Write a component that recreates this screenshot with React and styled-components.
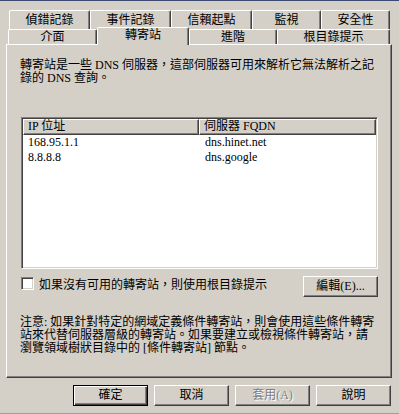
import React from "react";
import styled, { createGlobalStyle, css } from "styled-components";

const GlobalStyle = createGlobalStyle`
  html, body {
    margin: 0;
    padding: 0;
    background: #d4d0c8;
  }
  body {
    font-family: "Liberation Serif", "Noto Sans CJK TC", serif;
    font-size: 12px;
    color: #000;
  }
`;

const Window = styled.div`
  width: 399px;
  height: 414px;
  box-sizing: border-box;
  background: #d4d0c8;
  border-top: 1px solid #3c4a72;
  border-bottom: 1px solid #a09d96;
  padding-top: 9px;
  display: flex;
  flex-direction: column;
`;

const TabRow = styled.div`
  display: flex;
  padding-left: ${(p) => p.$indent}px;
  height: ${(p) => p.$height}px;
`;

const Tab = styled.div`
  position: relative;
  box-sizing: border-box;
  width: ${(p) => p.$w}px;
  height: 100%;
  background: #d4d0c8;
  border-top: 1px solid #fff;
  border-left: 1px solid #fff;
  border-right: 1px solid #404040;
  border-top-left-radius: 2px;
  border-top-right-radius: 2px;
  box-shadow: inset -1px 0 0 #808080;
  display: flex;
  align-items: center;
  justify-content: center;
  line-height: 13px;
  white-space: nowrap;
  ${(p) =>
    p.$active &&
    css`
      z-index: 2;
      margin-top: -2px;
      height: calc(100% + 3px);
      padding-bottom: 2px;
    `}
`;

const Panel = styled.div`
  box-sizing: border-box;
  margin-left: 6px;
  width: 386px;
  height: 334px;
  border-top: 1px solid #fff;
  border-left: 1px solid #fff;
  border-right: 1px solid #404040;
  border-bottom: 1px solid #404040;
  box-shadow: inset -1px -1px 0 #808080;
  padding: 14px 13px 0 13px;
  display: flex;
  flex-direction: column;
`;

const Para = styled.div`
  line-height: 13px;
  white-space: nowrap;
  margin-top: ${(p) => p.$top || 0}px;
`;

const ListBox = styled.div`
  box-sizing: border-box;
  width: 357px;
  height: 152px;
  margin: 32px 0 0 1px;
  background: #fff;
  border-top: 1px solid #808080;
  border-left: 1px solid #808080;
  border-right: 1px solid #fff;
  border-bottom: 1px solid #fff;
  box-shadow: inset 1px 1px 0 #404040, inset -1px -1px 0 #d4d0c8;
  padding: 1px;
`;

const HeaderRow = styled.div`
  display: flex;
  height: 16px;
`;

const HeaderCell = styled.div`
  box-sizing: border-box;
  width: ${(p) => (p.$w ? `${p.$w}px` : "auto")};
  flex: ${(p) => (p.$w ? "none" : 1)};
  background: #d4d0c8;
  border-top: 1px solid #fff;
  border-left: 1px solid #fff;
  border-right: 1px solid #404040;
  border-bottom: 1px solid #404040;
  box-shadow: inset -1px -1px 0 #808080;
  padding-left: 4px;
  line-height: 13px;
  white-space: nowrap;
`;

const Row = styled.div`
  display: flex;
  height: 15px;
  align-items: center;
`;

const Cell = styled.div`
  box-sizing: border-box;
  width: ${(p) => (p.$w ? `${p.$w}px` : "auto")};
  flex: ${(p) => (p.$w ? "none" : 1)};
  padding-left: ${(p) => p.$pad}px;
  line-height: 13px;
  white-space: nowrap;
`;

const OptionRow = styled.div`
  display: flex;
  align-items: flex-start;
  margin-top: 7px;
  height: 21px;
`;

const CheckBox = styled.span`
  box-sizing: border-box;
  width: 13px;
  height: 13px;
  margin: 1px 0 0 1px;
  background: #fff;
  border-top: 1px solid #808080;
  border-left: 1px solid #808080;
  border-right: 1px solid #fff;
  border-bottom: 1px solid #fff;
  box-shadow: inset 1px 1px 0 #404040, inset -1px -1px 0 #d4d0c8;
`;

const Label = styled.span`
  margin: 3px 0 0 5px;
  line-height: 13px;
  white-space: nowrap;
`;

const Button = styled.button`
  box-sizing: border-box;
  width: 75px;
  height: 21px;
  padding: 0;
  font: inherit;
  font-size: 12px;
  line-height: 13px;
  background: #d4d0c8;
  color: #000;
  border: 1px solid;
  border-color: #fff #404040 #404040 #fff;
  box-shadow: inset -1px -1px 0 #808080;
  white-space: nowrap;
  margin-left: ${(p) => (p.$push ? "auto" : "0")};
  ${(p) =>
    p.$default &&
    css`
      border-color: #000;
      box-shadow: inset 1px 1px 0 #fff, inset -1px -1px 0 #404040,
        inset -2px -2px 0 #808080;
    `}
  ${(p) =>
    p.disabled &&
    css`
      color: #808080;
      text-shadow: 1px 1px 0 #fff;
    `}
`;

const ButtonBar = styled.div`
  display: flex;
  justify-content: flex-end;
  gap: 6px;
  padding-right: 8px;
  margin-top: 7px;
`;

const backTabs = [
  { label: "偵錯記錄", w: 81 },
  { label: "事件記錄", w: 81 },
  { label: "信賴起點", w: 81 },
  { label: "監視", w: 69 },
  { label: "安全性", w: 69 },
];

const frontTabs = [
  { label: "介面", w: 89 },
  { label: "轉寄站", w: 92, active: true },
  { label: "進階", w: 88 },
  { label: "根目錄提示", w: 113 },
];

const forwarders = [
  { ip: "168.95.1.1", fqdn: "dns.hinet.net" },
  { ip: "8.8.8.8", fqdn: "dns.google" },
];

export default function App() {
  return (
    <>
      <GlobalStyle />
      <Window>
        <TabRow $indent={9} $height={19}>
          {backTabs.map((t) => (
            <Tab key={t.label} $w={t.w}>
              {t.label}
            </Tab>
          ))}
        </TabRow>
        <TabRow $indent={8} $height={15}>
          {frontTabs.map((t) => (
            <Tab key={t.label} $w={t.w} $active={t.active}>
              {t.label}
            </Tab>
          ))}
        </TabRow>
        <Panel>
          <Para>轉寄站是一些 DNS 伺服器，這部伺服器可用來解析它無法解析之記</Para>
          <Para>錄的 DNS 查詢。</Para>
          <ListBox>
            <HeaderRow>
              <HeaderCell $w={176}>IP 位址</HeaderCell>
              <HeaderCell>伺服器 FQDN</HeaderCell>
            </HeaderRow>
            {forwarders.map((f) => (
              <Row key={f.ip}>
                <Cell $w={176} $pad={5}>
                  {f.ip}
                </Cell>
                <Cell $pad={6}>{f.fqdn}</Cell>
              </Row>
            ))}
          </ListBox>
          <OptionRow>
            <CheckBox />
            <Label>如果沒有可用的轉寄站，則使用根目錄提示</Label>
            <Button $push>編輯(E)...</Button>
          </OptionRow>
          <Para $top={19}>注意: 如果針對特定的網域定義條件轉寄站，則會使用這些條件轉寄</Para>
          <Para>站來代替伺服器層級的轉寄站。如果要建立或檢視條件轉寄站，請</Para>
          <Para>瀏覽領域樹狀目錄中的 [條件轉寄站] 節點。</Para>
        </Panel>
        <ButtonBar>
          <Button $default>確定</Button>
          <Button>取消</Button>
          <Button disabled>套用(A)</Button>
          <Button>說明</Button>
        </ButtonBar>
      </Window>
    </>
  );
}
